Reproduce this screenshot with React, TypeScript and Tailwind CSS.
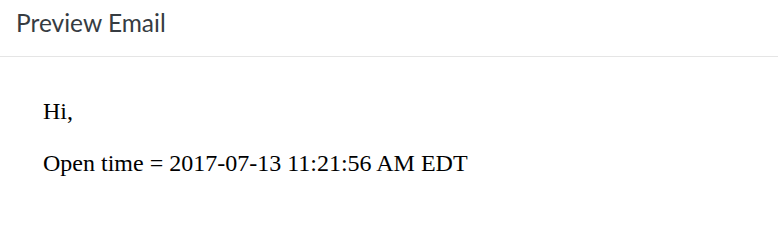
export default function App() {
  return (
    <div className="w-[778px] h-[252px] bg-white">
      {/* Header */}
      <div className="h-[57px] border-b border-[#e5e5e5] px-4 pt-[11px]">
        <h1 className="text-[24.5px] text-[#363c42] font-['Lato',sans-serif] leading-none">Preview Email</h1>
      </div>

      {/* Email body */}
      <div className="px-[43px] pt-[41px] font-['Liberation_Serif',serif] text-[24px] text-black">
        <p className="leading-[27px]">Hi,</p>
        <p className="leading-[27px] mt-[25px]">Open time = 2017-07-13 11:21:56 AM EDT</p>
      </div>
    </div>
  )
}
